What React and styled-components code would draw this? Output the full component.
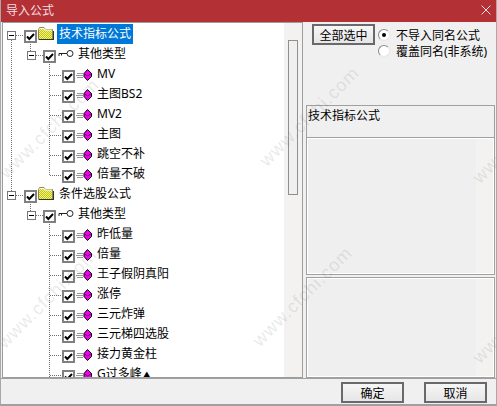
import React from "react";
import styled, { createGlobalStyle } from "styled-components";

const Global = createGlobalStyle`
  html, body { margin: 0; padding: 0; background: #f0f0f0; }
  body { font-family: "Noto Sans", "Noto Sans CJK SC", sans-serif; font-size: 12px; color: #000; }
`;

const Window = styled.div`
  position: relative;
  width: 497px;
  height: 406px;
  overflow: hidden;
  display: flex;
  flex-direction: column;
  background: #f0f0f0;
  border-left: 1px solid #a8a8a8;
  border-right: 1px solid #a8a8a8;
  border-bottom: 2px solid #a0a0a0;
  box-sizing: border-box;
`;
const TitleBar = styled.div`
  flex: 0 0 22px;
  margin: 0 -1px;
  background: #b33035;
  color: #f4dfe0;
  display: flex;
  align-items: center;
  justify-content: space-between;
  padding: 0 6px 2px 6px;
  box-sizing: border-box;
  font-size: 12px;
`;
const Close = styled.svg`
  width: 10px;
  height: 10px;
`;
const Main = styled.div`
  flex: 0 0 356px;
  height: 356px;
  min-height: 0;
  overflow: hidden;
  display: flex;
  gap: 3px;
  padding: 0 1px;
`;
const TreePanel = styled.div`
  width: 301px;
  flex: none;
  display: flex;
  background: #fff;
  border: 1px solid #9c9c9c;
  box-sizing: border-box;
  overflow: hidden;
`;
const Tree = styled.div`
  flex: 1;
  padding: 1px 0 0 2px;
  overflow: hidden;
`;
const Track = styled.div`
  width: 18px;
  flex: none;
  background: #f3f2f1;
  padding: 17px 4px 0 4px;
  box-sizing: border-box;
`;
const Thumb = styled.div`
  height: 155px;
  border: 1px solid #8f8f8f;
  background: #f0f0f0;
  box-sizing: border-box;
`;
const Row = styled.div`
  height: 20px;
  display: flex;
  align-items: stretch;
  white-space: nowrap;
`;
const Cell = styled.div`
  position: relative;
  width: 19px;
  flex: none;
  ${(p) =>
    p.$guide
      ? `&::before {
    content: "";
    position: absolute;
    left: 6px;
    top: ${p.$guide === "lead" ? 12 : 0}px;
    bottom: ${p.$guide === "half" ? 8 : 0}px;
    width: 1px;
    background: repeating-linear-gradient(#707070 0 1px, transparent 1px 2px);
  }`
      : ""}
`;
const Dash = styled.div`
  position: absolute;
  left: ${(p) => p.$x}px;
  top: 11px;
  width: ${(p) => p.$w}px;
  height: 1px;
  background: repeating-linear-gradient(90deg, #707070 0 1px, transparent 1px 2px);
`;
const Expander = styled.div`
  position: absolute;
  left: ${(p) => p.$x}px;
  top: 7px;
  width: 9px;
  height: 9px;
  box-sizing: border-box;
  border: 1px solid #777;
  background: #fff;
  &::after {
    content: "";
    position: absolute;
    left: 1px;
    top: 3px;
    width: 5px;
    height: 1px;
    background: #000;
  }
`;
const CheckBox = styled.div`
  flex: none;
  width: 13px;
  height: 13px;
  margin-top: 6px;
  box-sizing: border-box;
  border: 2px solid #808080;
  background: #fff;
  display: flex;
  align-items: center;
  justify-content: center;
`;
const IconSlot = styled.svg`
  flex: none;
  margin-left: ${(p) => p.$ml}px;
  margin-top: ${(p) => p.$mt}px;
`;
const Label = styled.div`
  flex: none;
  margin-left: ${(p) => p.$ml || 0}px;
  padding: 0 ${(p) => p.$pad || 0}px;
  height: 20px;
  line-height: 20px;
  font-size: 12px;
  color: ${(p) => (p.$selected ? "#fff" : "#000")};
  background: ${(p) => (p.$selected ? "#0078d7" : "transparent")};
`;
const Triangle = styled.span`
  font-size: 8px;
  margin-left: 1px;
`;
const Side = styled.div`
  flex: 1;
  min-width: 0;
  display: flex;
  flex-direction: column;
`;
const Options = styled.div`
  flex: 0 0 83px;
  display: flex;
  padding: 2px 0 0 6px;
  box-sizing: border-box;
  align-items: flex-start;
`;
const Button = styled.button`
  flex: none;
  width: 63px;
  height: 21px;
  padding: 0;
  box-sizing: border-box;
  border: 2px solid #696969;
  background: linear-gradient(#f6f6f6, #e6e6e6);
  font: 12px "Noto Sans CJK SC", sans-serif;
  color: #000;
`;
const Radios = styled.div`
  margin-left: 3px;
  padding-top: 3px;
  display: flex;
  flex-direction: column;
`;
const RadioRow = styled.div`
  height: 16px;
  display: flex;
  align-items: center;
  gap: 6px;
  white-space: nowrap;
`;
const Radio = styled.div`
  width: 12px;
  height: 12px;
  box-sizing: border-box;
  border-radius: 50%;
  background: #fff;
  border: 1px solid #8a8a8a;
  border-right-color: #e6e6e6;
  border-bottom-color: #e6e6e6;
  display: flex;
  align-items: center;
  justify-content: center;
  &::after {
    content: "";
    width: 4px;
    height: 4px;
    border-radius: 50%;
    background: ${(p) => (p.$on ? "#000" : "transparent")};
  }
`;
const Caption = styled.div`
  flex: 0 0 32px;
  line-height: 19px;
  padding-left: 1px;
  border: 1px solid #a0a0a0;
  border-bottom: none;
  box-sizing: border-box;
`;
const Well = styled.div`
  flex: ${(p) => p.$flex};
  min-height: 0;
  display: flex;
  justify-content: flex-end;
  background: #efefef;
  border: 1px solid #a0a0a0;
  outline: 1px solid #fff;
  outline-offset: -2px;
  box-sizing: border-box;
  margin-bottom: ${(p) => p.$mb || 0}px;
`;
const WellTrack = styled.div`
  width: 18px;
  background: #f3f2f1;
`;
const Footer = styled.div`
  flex: 1;
  min-height: 0;
  display: flex;
  justify-content: flex-end;
  align-items: center;
  gap: 20px;
  padding: 2px 9px 0 0;
  box-sizing: border-box;
  border-top: 1px solid #a0a0a0;
`;
const Watermark = styled.div`
  position: absolute;
  left: ${(p) => p.$x}px;
  top: ${(p) => p.$y}px;
  transform: rotate(-45deg);
  transform-origin: left center;
  font: 18px "Liberation Sans", sans-serif;
  letter-spacing: 1px;
  color: rgba(120, 120, 120, 0.17);
  pointer-events: none;
  white-space: nowrap;
`;

const Tick = () => (
  <svg width="9" height="9" viewBox="0 0 9 9">
    <path d="M1 4.5 L3.3 7 L8 2" fill="none" stroke="#000" strokeWidth="2" />
  </svg>
);
const Folder = () => (
  <IconSlot $ml={1} $mt={3} width="16" height="13" viewBox="0 0 16 13">
    <defs>
      <pattern id="dither" width="2" height="2" patternUnits="userSpaceOnUse">
        <rect width="2" height="2" fill="#ffff30" />
        <rect width="1" height="1" fill="#b8b860" />
        <rect x="1" y="1" width="1" height="1" fill="#b8b860" />
      </pattern>
    </defs>
    <path d="M0.5 2.5 L1.5 0.5 H6 L7.5 2.5 H14.5 V12.5 H0.5 Z" fill="url(#dither)" stroke="#8a8a50" />
    <path d="M1.5 1.5 H6 L7 3 H14" fill="none" stroke="#fff" />
    <path d="M15.5 4 V13 M1 12.5 H15" stroke="#333" />
  </IconSlot>
);
const Key = () => (
  <IconSlot $ml={2} $mt={6} width="16" height="9" viewBox="0 0 16 9">
    <circle cx="12" cy="3.5" r="3" fill="#fff" stroke="#222" />
    <path d="M9 3.5 H1 V6 M3.5 3.5 V5.5" fill="none" stroke="#222" />
  </IconSlot>
);
const Formula = () => (
  <IconSlot $ml={1} $mt={5} width="16" height="12" viewBox="0 0 16 12">
    <path d="M1 4.5 H7 M0 6.5 H7 M1 8.5 H7" stroke="#999" />
    <path d="M11.5 0.5 L15.5 4.5 V7.5 L11.5 11.5 L8 7.5 V4.5 Z" fill="#f000f0" stroke="#000" />
    <path d="M8 4.5 L11.5 7 L15.5 4.5" fill="none" stroke="#70006a" />
  </IconSlot>
);

const Group = ({ name, selected, guide }) => (
  <Row>
    <Cell $guide={guide}>
      <Expander $x={2} />
      <Dash $x={11} $w={8} />
    </Cell>
    <CheckBox>
      <Tick />
    </CheckBox>
    <Folder />
    <Label $ml={3} $pad={2} $selected={selected}>
      {name}
    </Label>
  </Row>
);
const Category = ({ guide }) => (
  <Row>
    <Cell $guide={guide} />
    <Cell $guide="half">
      <Expander $x={3} />
      <Dash $x={12} $w={7} />
    </Cell>
    <CheckBox>
      <Tick />
    </CheckBox>
    <Key />
    <Label $ml={4}>其他类型</Label>
  </Row>
);
const Item = ({ name, guide, last, flagged }) => (
  <Row>
    <Cell $guide={guide} />
    <Cell />
    <Cell $guide={last ? "half" : "full"}>
      <Dash $x={7} $w={12} />
    </Cell>
    <CheckBox>
      <Tick />
    </CheckBox>
    <Formula />
    <Label $ml={5}>
      {name}
      {flagged && <Triangle>▲</Triangle>}
    </Label>
  </Row>
);

const first = ["MV", "主图BS2", "MV2", "主图", "跳空不补", "倍量不破"];
const second = ["昨低量", "倍量", "王子假阴真阳", "涨停", "三元炸弹", "三元梯四选股", "接力黄金柱"];
const marks = [
  [2, 165], [0, 335], [262, 153], [255, 333], [475, 170], [475, 350],
];

export default function App() {
  return (
    <Window>
      <Global />
      <TitleBar>
        <span>导入公式</span>
        <Close viewBox="0 0 10 10">
          <path d="M0.5 0.5 L9.5 9.5 M9.5 0.5 L0.5 9.5" stroke="#f4dfe0" />
        </Close>
      </TitleBar>
      <Main>
        <TreePanel>
          <Tree>
            <Group name="技术指标公式" selected guide="lead" />
            <Category guide="full" />
            {first.map((n, i) => (
              <Item key={n} name={n} guide="full" last={i === first.length - 1} />
            ))}
            <Group name="条件选股公式" guide="half" />
            <Category />
            {second.map((n) => (
              <Item key={n} name={n} />
            ))}
            <Item name="G过多峰" flagged />
          </Tree>
          <Track>
            <Thumb />
          </Track>
        </TreePanel>
        <Side>
          <Options>
            <Button>全部选中</Button>
            <Radios>
              <RadioRow>
                <Radio $on />
                不导入同名公式
              </RadioRow>
              <RadioRow>
                <Radio />
                覆盖同名(非系统)
              </RadioRow>
            </Radios>
          </Options>
          <Caption>技术指标公式</Caption>
          <Well $flex="0 0 138px" $mb={2}>
            <WellTrack />
          </Well>
          <Well $flex="1">
            <WellTrack />
          </Well>
        </Side>
      </Main>
      <Footer>
        <Button>确定</Button>
        <Button>取消</Button>
      </Footer>
      {marks.map(([x, y]) => (
        <Watermark key={x + "-" + y} $x={x} $y={y}>
          www.cfchi.com
        </Watermark>
      ))}
    </Window>
  );
}
